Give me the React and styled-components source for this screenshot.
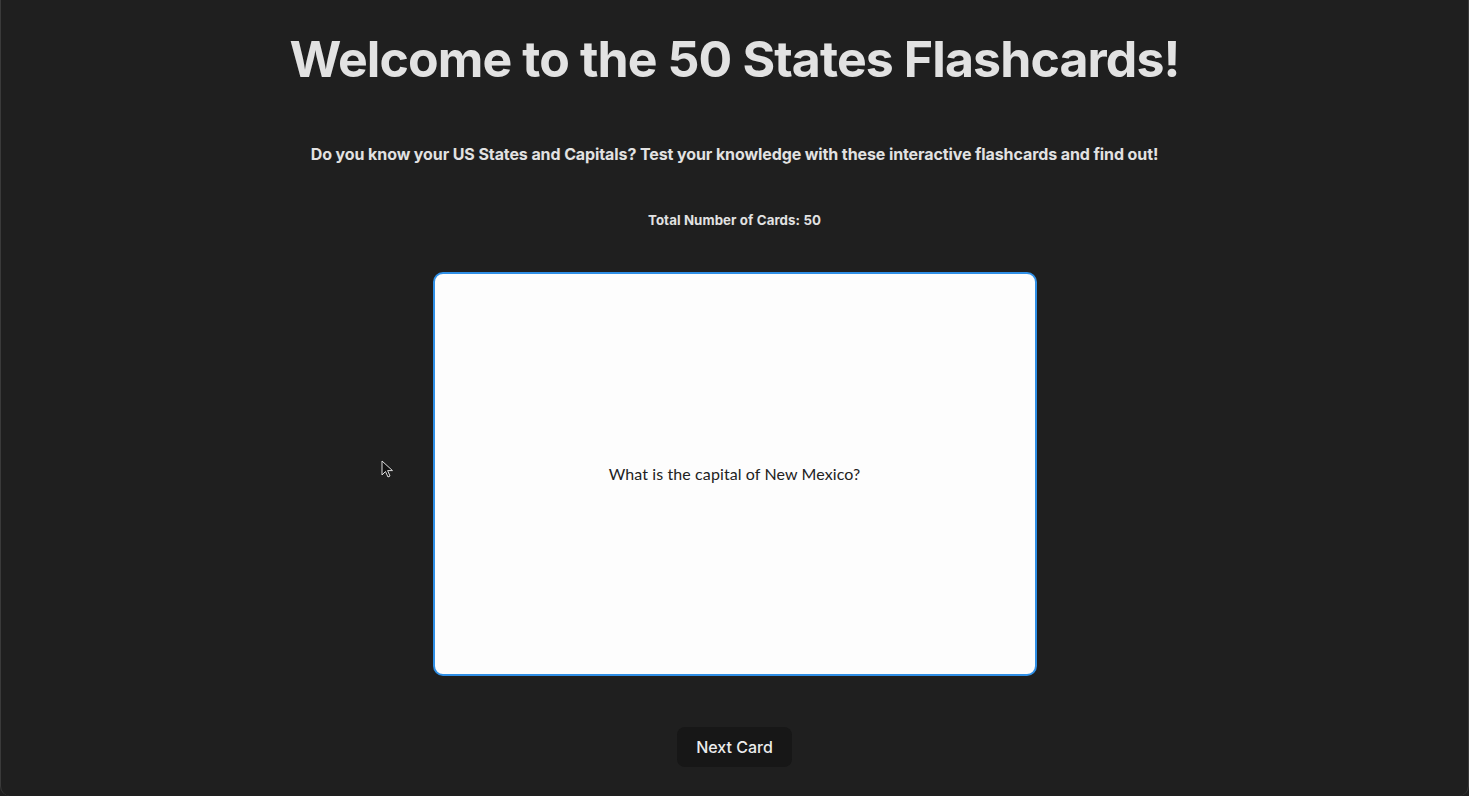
import React, { useState } from "react";
import styled, { createGlobalStyle } from "styled-components";

const GlobalStyle = createGlobalStyle`
  html, body {
    margin: 0;
    padding: 0;
    background: #1f1f1f;
  }
  body {
    font-family: Inter, "Liberation Sans", Arial, sans-serif;
    -webkit-font-smoothing: antialiased;
  }
  * { box-sizing: border-box; }
`;

const Frame = styled.div`
  position: relative;
  width: 1469px;
  height: 796px;
  overflow: hidden;
  background: #1f1f1f;
  border-left: 1px solid #3a3a3a;
  border-right: 1px solid #3a3a3a;
  border-bottom-right-radius: 10px;
  border-bottom-left-radius: 10px;
  display: flex;
  flex-direction: column;
  align-items: center;
  padding-top: 32px;
  color: rgba(255, 255, 255, 0.87);
`;

const Title = styled.h1`
  margin: 0;
  font-size: 50px;
  line-height: 55px;
  font-weight: 700;
  color: #e2e2e2;
  letter-spacing: -0.9px;
`;

const Subtitle = styled.h3`
  margin: 55px 0 0;
  font-size: 16px;
  line-height: 24px;
  font-weight: 700;
  color: #e2e2e2;
  letter-spacing: -0.1px;
`;

const Count = styled.h5`
  margin: 44px 0 0;
  font-size: 13.28px;
  line-height: 20px;
  font-weight: 700;
  color: #e2e2e2;
  letter-spacing: 0.1px;
`;

const Card = styled.div`
  margin-top: 42px;
  width: 604px;
  height: 404px;
  background: #fdfdfd;
  border: 2px solid #2f8fe6;
  border-radius: 10px;
  display: flex;
  align-items: center;
  justify-content: center;
  cursor: pointer;
`;

const CardText = styled.p`
  margin: 0 0 2px;
  font-family: Lato, "Open Sans", "DejaVu Sans", sans-serif;
  font-size: 16px;
  color: #222222;
  letter-spacing: 0.1px;
`;

const NextButton = styled.button`
  margin-top: 51px;
  height: 40px;
  padding: 0 18px;
  border-radius: 8px;
  border: 1px solid transparent;
  background: #171717;
  color: #ececec;
  font-family: Inter, "Liberation Sans", Arial, sans-serif;
  font-size: 16px;
  font-weight: 500;
  cursor: pointer;
`;

const Cursor = styled.svg`
  position: absolute;
  left: 380px;
  top: 460px;
  width: 13px;
  height: 20px;
  pointer-events: none;
`;

const cards = [
  "What is the capital of New Mexico?",
  "What is the capital of Texas?",
  "What is the capital of Ohio?",
];

export default function App() {
  const [idx, setIdx] = useState(0);
  return (
    <>
      <GlobalStyle />
      <Frame>
        <Title>Welcome to the 50 States Flashcards!</Title>
        <Subtitle>
          Do you know your US States and Capitals? Test your knowledge with these interactive flashcards and find out!
        </Subtitle>
        <Count>Total Number of Cards: 50</Count>
        <Card>
          <CardText>{cards[idx]}</CardText>
        </Card>
        <NextButton onClick={() => setIdx((idx + 1) % cards.length)}>Next Card</NextButton>
        <Cursor viewBox="0 0 13 20">
          <path
            d="M1 1 L1 15 L4.5 11.5 L7 17 L9 16 L6.6 10.6 L11.5 10.6 Z"
            fill="#111"
            stroke="#ddd"
            strokeWidth="1"
            strokeLinejoin="round"
          />
        </Cursor>
      </Frame>
    </>
  );
}
